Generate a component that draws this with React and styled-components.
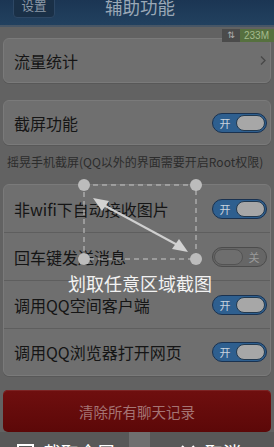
import React from 'react';
import styled, { createGlobalStyle } from 'styled-components';

const GlobalStyle = createGlobalStyle`
  html, body {
    margin: 0;
    padding: 0;
  }
  body {
    background: #626262;
    font-family: "Noto Sans CJK SC", "Noto Sans", sans-serif;
  }
`;

const Screen = styled.div`
  position: relative;
  width: 274px;
  height: 447px;
  overflow: hidden;
  background: #626262;
`;

// Top navigation bar, page is scrolled so its top is off screen
const Header = styled.header`
  display: grid;
  grid-template-columns: 1fr auto 1fr;
  align-items: start;
  height: 33px;
  margin-top: -8px;
  padding: 0 7px 0 13px;
  background: linear-gradient(#193250, #22415f);
  border-bottom: 2px solid #475666;
`;

const BackButton = styled.div`
  justify-self: start;
  display: flex;
  align-items: center;
  justify-content: center;
  box-sizing: border-box;
  width: 42px;
  height: 26px;
  border: 1px solid #2d4764;
  border-radius: 4px;
  background: #1a3047;
  color: #8d9aa8;
  font-size: 12.5px;
`;

const Title = styled.h1`
  margin: 5px 0 0;
  font-size: 17.5px;
  font-weight: normal;
  line-height: 20px;
  color: #9aa8b6;
`;

// Floating traffic monitor
const Traffic = styled.div`
  position: absolute;
  top: 29px;
  right: 0;
  display: flex;
  height: 13px;
  font-size: 10px;
  line-height: 13px;
`;

const TrafficIcon = styled.div`
  width: 18px;
  background: #4b4b4b;
  color: #b0b0b0;
  text-align: center;
  font-family: "DejaVu Sans", sans-serif;
  font-size: 9px;
`;

const TrafficValue = styled.div`
  width: 34px;
  padding-left: 4px;
  box-sizing: border-box;
  overflow: hidden;
  white-space: nowrap;
  background: #56703f;
  color: #a4bb8d;
  font-family: "Liberation Sans", sans-serif;
`;

const Content = styled.main`
  padding: 11px 3px 0;
`;

const Card = styled.section`
  margin-top: ${(p) => p.$gap || 0}px;
  background: #6f6f6f;
  border: 1px solid #7a7a7a;
  border-radius: 6px;
  box-shadow: 0 1px 0 #585858;
`;

const Row = styled.div`
  display: flex;
  align-items: center;
  justify-content: space-between;
  box-sizing: border-box;
  height: ${(p) => p.$h}px;
  padding: 0 3px 0 10px;
  & + & {
    border-top: 1px solid #5e5e5e;
  }
`;

const Label = styled.span`
  font-size: 16px;
  line-height: 20px;
  color: #151515;
  white-space: nowrap;
`;

const Caption = styled.p`
  margin: 0;
  padding: 10px 0 15px 4px;
  font-size: 12px;
  line-height: 14px;
  color: #2c2c2c;
  white-space: nowrap;
`;

const Toggle = styled.div`
  display: flex;
  flex-direction: ${(p) => (p.$on ? 'row' : 'row-reverse')};
  align-items: center;
  box-sizing: border-box;
  width: 55px;
  height: 20px;
  padding: 0 1px;
  border-radius: 10px;
  border: 1px solid ${(p) => (p.$on ? '#1a3250' : '#4c4c4c')};
  background: ${(p) => (p.$on ? '#2e5f8f' : '#666666')};
`;

const ToggleText = styled.span`
  flex: 1;
  text-align: center;
  font-size: 11px;
  color: ${(p) => (p.$on ? '#c9d3dd' : '#9a9a9a')};
`;

const Knob = styled.span`
  box-sizing: border-box;
  width: 29px;
  height: 16px;
  border-radius: 8px;
  background: ${(p) => (p.$on ? '#a7a7a7' : '#6e6e6e')};
  border: 1px solid ${(p) => (p.$on ? '#22394f' : '#535353')};
`;

const ClearButton = styled.div`
  display: flex;
  align-items: center;
  justify-content: center;
  height: 42px;
  margin-top: 14px;
  border-radius: 5px;
  background: linear-gradient(#6f0f0f, #5c0808);
  box-shadow: inset 0 1px 0 #7d2424;
  color: #a57474;
  font-size: 14.5px;
`;

// Screenshot tool overlay
const Selection = styled.svg`
  position: absolute;
  left: 76px;
  top: 177px;
`;

const Hint = styled.div`
  position: absolute;
  left: 6px;
  right: 0;
  top: 273px;
  text-align: center;
  font-size: 18px;
  line-height: 20px;
  color: #f2f2f2;
`;

const Toolbar = styled.div`
  position: absolute;
  left: 0;
  right: 0;
  top: 432px;
  display: grid;
  grid-template-columns: 129px 21px 1fr;
  height: 40px;
  background: #585858;
`;

const ToolButton = styled.div`
  display: flex;
  align-items: flex-start;
  gap: 9px;
  padding: 10px 0 0 ${(p) => p.$pad}px;
  color: #ffffff;
  font-size: 18px;
  line-height: 20px;
`;

const Divider = styled.div`
  background: #6f6f6f;
`;

const Chevron = () => (
  <svg width="8" height="11" viewBox="0 0 8 11">
    <polyline points="2,1.5 6,5.5 2,9.5" fill="none" stroke="#474747" strokeWidth="1.3" />
  </svg>
);

const Switch = ({ on }) => (
  <Toggle $on={on}>
    <ToggleText $on={on}>{on ? '开' : '关'}</ToggleText>
    <Knob $on={on} />
  </Toggle>
);

const items = [
  { text: '非wifi下自动接收图片', on: true, h: 47 },
  { text: '回车键发送消息', on: false, h: 48 },
  { text: '调用QQ空间客户端', on: true, h: 48 },
  { text: '调用QQ浏览器打开网页', on: true, h: 47 },
];

export default function App() {
  return (
    <Screen>
      <GlobalStyle />
      <Header>
        <BackButton>设置</BackButton>
        <Title>辅助功能</Title>
      </Header>
      <Content>
        <Card>
          <Row $h={43}>
            <Label>流量统计</Label>
            <Chevron />
          </Row>
        </Card>
        <Card $gap={17}>
          <Row $h={43}>
            <Label>截屏功能</Label>
            <Switch on />
          </Row>
        </Card>
        <Caption>摇晃手机截屏(QQ以外的界面需要开启Root权限)</Caption>
        <Card>
          {items.map((it) => (
            <Row $h={it.h} key={it.text}>
              <Label>{it.text}</Label>
              <Switch on={it.on} />
            </Row>
          ))}
        </Card>
        <ClearButton>清除所有聊天记录</ClearButton>
      </Content>

      <Traffic>
        <TrafficIcon>⇅</TrafficIcon>
        <TrafficValue>233M</TrafficValue>
      </Traffic>

      <Selection width="128" height="92" viewBox="0 0 128 92">
        <rect x="8" y="8" width="112" height="74" fill="none" stroke="#bdbdbd" strokeOpacity="0.75" strokeWidth="1.5" strokeDasharray="5 4" />
        <line x1="22" y1="25" x2="107" y2="71" stroke="#cfcfcf" strokeWidth="2" />
        <polygon points="17,21 33,24 26,34" fill="#d2d2d2" />
        <polygon points="112,75 96,72 103,62" fill="#d2d2d2" />
        <circle cx="8" cy="8" r="6" fill="#bcbcbc" />
        <circle cx="120" cy="8" r="6" fill="#bcbcbc" />
        <circle cx="8" cy="82" r="6" fill="#bcbcbc" />
        <circle cx="120" cy="82" r="6" fill="#bcbcbc" />
      </Selection>
      <Hint>划取任意区域截图</Hint>

      <Toolbar>
        <ToolButton $pad={17}>
          <svg width="17" height="16" viewBox="0 0 17 16" style={{ marginTop: 2 }}>
            <rect x="1" y="1" width="15" height="13" fill="none" stroke="#fff" strokeWidth="2" />
          </svg>
          截取全屏
        </ToolButton>
        <Divider />
        <ToolButton $pad={30}>
          <svg width="16" height="16" viewBox="0 0 16 16" style={{ marginTop: 2 }}>
            <path d="M2 2 L14 14 M14 2 L2 14" stroke="#fff" strokeWidth="2" />
          </svg>
          取消
        </ToolButton>
      </Toolbar>
    </Screen>
  );
}
